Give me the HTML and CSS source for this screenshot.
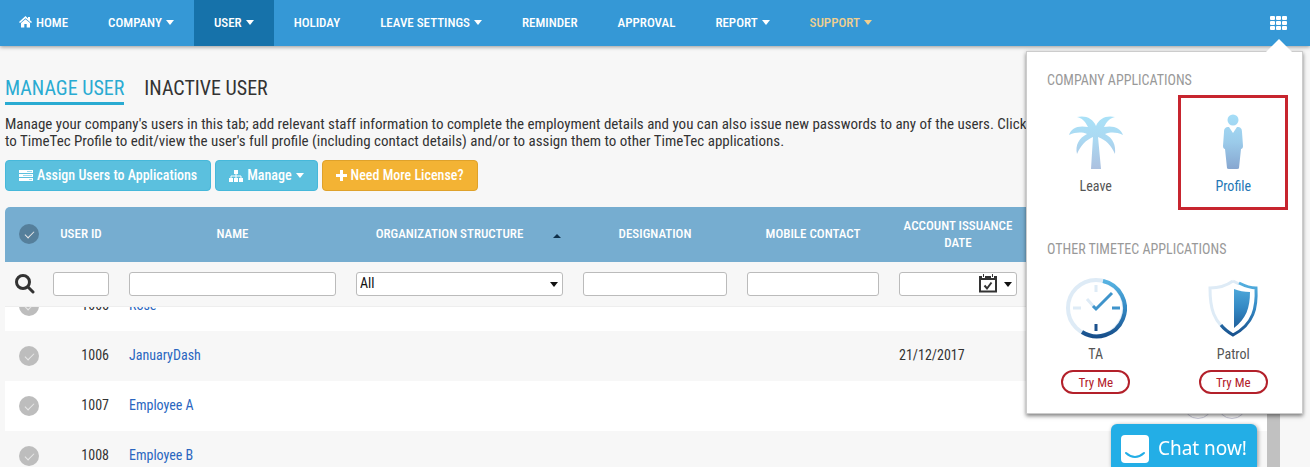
FILE: index.html
```
<!DOCTYPE html>
<html lang="en">
<head>
    <meta charset="UTF-8">
    <meta name="viewport" content="width=device-width, initial-scale=1.0">
    <title>Manage User</title>
    <link rel="stylesheet" href="styles.css">
</head>
<body>

    <!-- Top menu -->
    <header class="topbar">
        <nav class="menu">
            <a href="#">
                <svg class="home-icon" viewBox="0 0 13 12" aria-hidden="true"><path d="M6.500 0L0 6l1 1 5.500-4.700L12 7l1-1-2-1.800V1H9v1.500zM6.500 3.200L2 7v4.500h3.300V8h2.400v3.500H11V7z" fill="currentColor"/></svg>
                HOME
            </a>
            <a href="#">COMPANY <span class="caret"></span></a>
            <a href="#" class="active">USER <span class="caret"></span></a>
            <a href="#">HOLIDAY</a>
            <a href="#">LEAVE SETTINGS <span class="caret"></span></a>
            <a href="#">REMINDER</a>
            <a href="#">APPROVAL</a>
            <a href="#">REPORT <span class="caret"></span></a>
            <a href="#" class="support">SUPPORT <span class="caret"></span></a>
        </nav>
        <div class="apps">
            <button type="button" class="apps-button" aria-label="Applications">
                <svg width="18" height="15" viewBox="0 0 18 15"><g fill="#fff"><rect width="5" height="4" rx="1"/><rect x="6" width="5" height="4" rx="1"/><rect x="12" width="5" height="4" rx="1"/><rect y="5" width="5" height="4" rx="1"/><rect x="6" y="5" width="5" height="4" rx="1"/><rect x="12" y="5" width="5" height="4" rx="1"/><rect y="10" width="5" height="4" rx="1"/><rect x="6" y="10" width="5" height="4" rx="1"/><rect x="12" y="10" width="5" height="4" rx="1"/></g></svg>
            </button>

            <!-- Applications popup -->
            <div class="apps-popup">
                <h3>COMPANY APPLICATIONS</h3>
                <div class="app-grid">
                    <a href="#" class="app">
                        <svg width="56" height="56" viewBox="0 0 56 56" aria-hidden="true">
                            <defs><linearGradient id="sky" x1="0" y1="0" x2="0" y2="56" gradientUnits="userSpaceOnUse"><stop offset="0" stop-color="#a9e2f8"/><stop offset=".45" stop-color="#abd9f2"/><stop offset="1" stop-color="#acc0df"/></linearGradient></defs>
                            <path fill="url(#sky)" d="M28 12C25 4 17 1 9 3c5 1 8 4 11 10C10 11 3 14 1 21c7-3 13-3 18-1C11 24 7 31 9 40c4-9 9-14 16-17l-2 32h10l-3-32c8 3 13 8 17 17 1-9-2-16-10-20 6-2 11-2 18 1C53 14 45 11 36 13c3-6 6-9 11-10C39 1 31 4 28 12z"/>
                        </svg>
                        Leave
                    </a>
                    <a href="#" class="app selected">
                        <svg width="56" height="56" viewBox="0 0 56 56" aria-hidden="true">
                            <defs><linearGradient id="suit" x1="0" y1="0" x2="0" y2="56" gradientUnits="userSpaceOnUse"><stop offset="0" stop-color="#a5def8"/><stop offset=".5" stop-color="#9bcbea"/><stop offset="1" stop-color="#86a5cf"/></linearGradient></defs>
                            <g fill="url(#suit)"><circle cx="28" cy="6" r="5.500"/><path d="M24 13l4 6 4-6c4 0 5 2 5 5l1 14c0 2-1 3-2 3l-2 19q0 1-2 1h-8q-2 0-2-1l-2-19c-1 0-2-1-2-3l1-14c0-3 1-5 5-5z"/></g>
                        </svg>
                        Profile
                    </a>
                </div>
                <h3>OTHER TIMETEC APPLICATIONS</h3>
                <div class="app-grid">
                    <div class="app trial">
                        <svg width="62" height="62" viewBox="0 0 62 62" fill="none" aria-hidden="true">
                            <defs><linearGradient id="deep" x1="0" y1="0" x2="0" y2="62" gradientUnits="userSpaceOnUse"><stop offset="0" stop-color="#5cb9e6"/><stop offset=".5" stop-color="#3489c4"/><stop offset="1" stop-color="#154a86"/></linearGradient></defs>
                            <circle cx="31" cy="31" r="28" stroke="#deebf6" stroke-width="4"/>
                            <path d="M38 4A28 28 0 1 1 17 55" stroke="url(#deep)" stroke-width="4"/>
                            <path d="M31 8v7M8 31h8M22 22l8 9" stroke="#deebf6" stroke-width="3"/>
                            <path d="M28 29l3 3 16-16M47 31h8" stroke="#3f94cb" stroke-width="3"/>
                            <path d="M31 47v7" stroke="#1c518d" stroke-width="3"/>
                        </svg>
                        <a href="#">TA</a>
                        <button type="button" class="try">Try Me</button>
                    </div>
                    <div class="app trial">
                        <svg width="62" height="62" viewBox="0 0 62 62" fill="none" aria-hidden="true">
                            <path d="M31 4c-7 5-15 7-23 7 0 18 2 35 23 47" stroke="#deebf6" stroke-width="3"/>
                            <path d="M31 4l6 3" stroke="#deebf6" stroke-width="3"/>
                            <path d="M37 6c6 3 11 5 17 5 1 19-2 36-23 47-5-3-9-6-12-10" stroke="url(#deep)" stroke-width="3"/>
                            <path d="M32 12c5 2 10 3 16 3 0 16-4 27-16 36z" fill="url(#deep)"/>
                        </svg>
                        <a href="#">Patrol</a>
                        <button type="button" class="try">Try Me</button>
                    </div>
                </div>
            </div>
        </div>
    </header>

    <!-- Main content -->
    <main class="content">
        <div class="tabs">
            <a href="#" class="active">MANAGE USER</a>
            <a href="#">INACTIVE USER</a>
        </div>

        <p class="intro">
            Manage your company's users in this tab; add relevant staff information to complete the employment details and you can also issue new passwords to any of the users. Click Edit<br>
            to TimeTec Profile to edit/view the user's full profile (including contact details) and/or to assign them to other TimeTec applications.
        </p>

        <div class="actions">
            <button type="button" class="btn">
                <svg width="14" height="12" viewBox="0 0 14 12"><path d="M0 0h14v3H0zM0 4h14v3H0zM0 8h14v3H0z" fill="#fff"/><path d="M8 1.500h5M4 5.500h9M10 9.500h3" stroke="#5bc0de" opacity=".6"/></svg>
                Assign Users to Applications
            </button>
            <button type="button" class="btn">
                <svg width="14" height="12" viewBox="0 0 14 12"><path d="M5 0h4v4H5zM0 8h4v4H0zM5 8h4v4H5zM10 8h4v4h-4z" fill="#fff"/><path d="M7 3v6M2 9V6h10v3" stroke="#fff" fill="none"/></svg>
                Manage <span class="caret"></span>
            </button>
            <button type="button" class="btn btn-warning">
                <svg width="11" height="11" viewBox="0 0 11 11"><path d="M4 0h3v4h4v3H7v4H4V7H0V4h4z" fill="#fff"/></svg>
                Need More License?
            </button>
        </div>

        <!-- User list -->
        <table class="user-table user-head">
            <colgroup><col class="c-check"><col class="c-id"><col class="c-name"><col class="c-org"><col class="c-desig"><col class="c-mobile"><col class="c-date"><col></colgroup>
            <thead>
                <tr>
                    <th><input type="checkbox" class="check" aria-label="Select all"></th>
                    <th>USER ID</th>
                    <th>NAME</th>
                    <th class="sorted">ORGANIZATION STRUCTURE</th>
                    <th>DESIGNATION</th>
                    <th>MOBILE CONTACT</th>
                    <th>ACCOUNT ISSUANCE DATE</th>
                    <th></th>
                </tr>
                <tr class="filters">
                    <td><svg class="search-icon" width="20" height="20" viewBox="0 0 20 20"><circle cx="8" cy="8" r="6.500" fill="none" stroke="#333" stroke-width="3"/><path d="M13 13l5 5" stroke="#333" stroke-width="3" stroke-linecap="round"/></svg></td>
                    <td><input type="text" aria-label="User ID"></td>
                    <td><input type="text" aria-label="Name"></td>
                    <td><div class="select"><select aria-label="Organization structure"><option>All</option></select></div></td>
                    <td><input type="text" aria-label="Designation"></td>
                    <td><input type="text" aria-label="Mobile contact"></td>
                    <td>
                        <div class="date">
                            <input type="text" aria-label="Account issuance date">
                            <svg width="18" height="19" viewBox="0 0 18 19"><path d="M1 3h16v14.500H1z" fill="#fff" stroke="#333" stroke-width="2"/><path d="M0 2h18v4H0z" fill="#333"/><path d="M4.500 0v4M13.500 0v4" stroke="#fff" stroke-width="3"/><path d="M4.500 0v3M13.500 0v3" stroke="#333"/><path d="M5.500 11.500l2.500 3 4.500-6" fill="none" stroke="#333" stroke-width="2"/></svg>
                        </div>
                    </td>
                    <td></td>
                </tr>
            </thead>
        </table>
        <div class="rows">
            <table class="user-table user-body">
                <colgroup><col class="c-check"><col class="c-id"><col class="c-name"><col class="c-org"><col class="c-desig"><col class="c-mobile"><col class="c-date"><col></colgroup>
                <tbody>
                    <tr>
                        <td><input type="checkbox" class="check" aria-label="Select 1005"></td>
                        <td>1005</td>
                        <td><a href="#">Rose</a></td>
                        <td></td><td></td><td></td><td></td><td></td>
                    </tr>
                    <tr>
                        <td><input type="checkbox" class="check" aria-label="Select 1006"></td>
                        <td>1006</td>
                        <td><a href="#">JanuaryDash</a></td>
                        <td></td><td></td><td></td>
                        <td>21/12/2017</td>
                        <td></td>
                    </tr>
                    <tr>
                        <td><input type="checkbox" class="check" aria-label="Select 1007"></td>
                        <td>1007</td>
                        <td><a href="#">Employee A</a></td>
                        <td></td><td></td><td></td><td></td>
                        <td class="row-tools"><button type="button" aria-label="Edit"></button><button type="button" aria-label="Delete"></button></td>
                    </tr>
                    <tr>
                        <td><input type="checkbox" class="check" aria-label="Select 1008"></td>
                        <td>1008</td>
                        <td><a href="#">Employee B</a></td>
                        <td></td><td></td><td></td><td></td><td></td>
                    </tr>
                </tbody>
            </table>
            <div class="scroll-thumb"></div>
        </div>
    </main>

    <!-- Chat -->
    <button type="button" class="chat">
        <svg width="28" height="28" viewBox="0 0 28 28"><rect width="28" height="28" rx="4" fill="#fff"/><path d="M5 18q9 8 18 0" fill="none" stroke="#23aee6" stroke-width="2" stroke-linecap="round"/></svg>
        Chat now!
    </button>

</body>
</html>
```
FILE: styles.css
```
* {
    margin: 0;
    padding: 0;
    box-sizing: border-box;
}

/* General layout */
body {
    font-family: "Roboto Condensed", Roboto, sans-serif;
    font-size: 14px;
    line-height: 17px;
    color: #333;
    display: flex;
    flex-direction: column;
    height: 100vh;
    overflow: hidden;
    background-color: #f7f7f7;
}

a {
    color: inherit;
    text-decoration: none;
}

button,
input,
select {
    font: inherit;
    color: inherit;
}

button {
    border: none;
    background: none;
    cursor: pointer;
}

/* Top menu */
.topbar {
    display: flex;
    justify-content: space-between;
    flex-shrink: 0;
    height: 46px;
    background-color: #3598d6;
    box-shadow: 0 1px 4px rgba(0, 0, 0, 0.4);
    position: relative;
    z-index: 2;
}

.menu {
    display: flex;
}

.menu a {
    display: flex;
    align-items: center;
    gap: 4px;
    padding: 0 20px 2px;
    color: white;
    font-size: 13px;
    font-weight: 500;
    white-space: nowrap;
}

.menu a:first-child {
    padding-left: 19px;
}

.menu .active {
    background-color: #1672aa;
}

.menu .support {
    color: #f0cf8f;
}

.home-icon {
    width: 13px;
    height: 12px;
}

.caret {
    display: inline-block;
    border: 4px solid transparent;
    border-top: 5px solid;
    border-bottom: none;
}

/* Applications popup */
.apps {
    display: flex;
    position: relative;
    padding-right: 22px;
}

.apps-button svg {
    display: block;
}

.apps-popup {
    position: absolute;
    top: 51px;
    right: 7px;
    width: 277px;
    padding: 20px 0 16px;
    background-color: white;
    border: 1px solid #ccc;
    box-shadow: 0 2px 4px rgba(0, 0, 0, 0.5);
}

.apps-popup::before {
    content: "";
    position: absolute;
    top: -13px;
    right: 10px;
    border: 13px solid transparent;
    border-top: none;
    border-bottom-color: white;
}

.apps-popup h3 {
    padding-left: 20px;
    font-size: 14px;
    font-weight: normal;
    color: #999;
}

.app-grid + h3 {
    margin-top: 31px;
}

.app-grid {
    display: grid;
    grid-template-columns: 1fr 1fr;
    justify-items: center;
    padding-top: 6px;
}

.app {
    display: flex;
    flex-direction: column;
    align-items: center;
    gap: 8px;
    width: 110px;
    min-height: 115px;
    padding-top: 16px;
    border: 3px solid transparent;
    color: #555;
}

.app.selected {
    color: #2377b5;
    border-color: #c7252f;
}

.app.trial {
    gap: 7px;
    padding-top: 10px;
}

.try {
    width: 69px;
    height: 24px;
    border: 2px solid #b3202a;
    border-radius: 12px;
    color: #b3202a;
    font-size: 13px;
}

/* Main content */
.content {
    display: flex;
    flex-direction: column;
    flex: 1;
    min-height: 0;
    padding: 30px 30px 0 5px;
}

.tabs {
    display: flex;
    gap: 20px;
    font-size: 20px;
    line-height: 25px;
}

.tabs a {
    padding-bottom: 1px;
    border-bottom: 3px solid transparent;
}

.tabs .active {
    color: #2aabd2;
    border-color: #2aabd2;
}

.intro {
    padding: 11px 0 10px;
    font-size: 15px;
    white-space: nowrap;
}

.actions {
    display: flex;
    gap: 4px;
    margin-bottom: 16px;
}

.btn {
    display: flex;
    align-items: center;
    gap: 4px;
    height: 31px;
    padding: 0 13px;
    background-color: #5bc0de;
    border: 1px solid #46b8da;
    border-radius: 4px;
    color: white;
    font-weight: 500;
}

.btn-warning {
    background-color: #f3b334;
    border-color: #dfa22b;
}

/* User list */
.user-table {
    width: 100%;
    table-layout: fixed;
    border-collapse: collapse;
}

.c-check { width: 38px; }
.c-id { width: 76px; }
.c-name,
.c-org { width: 227px; }
.c-desig { width: 164px; }
.c-mobile { width: 152px; }
.c-date { width: 138px; }

.user-head th {
    height: 55px;
    padding: 0 10px 2px;
    background-color: #76add0;
    color: white;
    font-size: 13px;
    font-weight: 500;
}

.user-head th:first-child {
    border-top-left-radius: 5px;
}

.user-head .sorted {
    position: relative;
    padding-right: 30px;
}

.sorted::after {
    content: "";
    position: absolute;
    right: 12px;
    top: 27px;
    border: 4px solid transparent;
    border-top: none;
    border-bottom-color: #10304a;
}

.filters td {
    height: 44px;
    padding: 0 10px;
    border-bottom: 1px solid #eee;
}

.filters input,
.filters select {
    display: block;
    width: 100%;
    height: 24px;
    background-color: white;
    border: 1px solid #bbb;
    border-radius: 3px;
}

.filters select {
    appearance: none;
    padding-left: 3px;
    color: #111;
}

.select,
.date {
    position: relative;
}

.select::after,
.date::after {
    content: "";
    position: absolute;
    right: 5px;
    top: 10px;
    border: 4px solid transparent;
    border-top: 5px solid #111;
    border-bottom: none;
}

.date svg {
    position: absolute;
    right: 20px;
    top: 2px;
}

.search-icon {
    display: block;
}

/* Round tick boxes */
.check {
    appearance: none;
    display: block;
    position: relative;
    width: 20px;
    height: 20px;
    margin-left: 4px;
    border-radius: 50%;
    background-color: #bdbdbd;
}

.check::after {
    content: "";
    position: absolute;
    left: 8px;
    top: 5px;
    width: 4px;
    height: 8px;
    border: solid #e8e8e8;
    border-width: 0 1px 1px 0;
    transform: rotate(45deg);
}

th .check {
    background-color: #557f9b;
}

.rows {
    display: flex;
    flex: 1;
    min-height: 0;
    overflow: hidden;
}

.user-body {
    flex: 1;
    align-self: flex-start;
    margin-top: -26px;
}

.user-body td {
    height: 50px;
    padding: 0 10px;
}

.user-body td:nth-child(2) {
    text-align: right;
}

.user-body tr:nth-child(odd) {
    background-color: white;
}

.user-body a {
    color: #2a66c0;
}

.user-body .row-tools {
    padding-left: 156px;
    white-space: nowrap;
}

.row-tools button {
    width: 30px;
    height: 30px;
    margin-right: 4px;
    border: 1px solid #ccccdc;
    border-radius: 50%;
}

.scroll-thumb {
    width: 13px;
    background-color: #c1c1c1;
}

/* Chat */
.chat {
    position: fixed;
    z-index: 3;
    right: 53px;
    bottom: 0;
    display: flex;
    align-items: center;
    gap: 9px;
    height: 43px;
    padding: 6px 10px 0;
    background-color: #23aee6;
    border-radius: 6px 6px 0 0;
    box-shadow: 1px 1px 4px rgba(0, 0, 0, 0.4);
    color: white;
    font-family: "Noto Sans", sans-serif;
    font-size: 19px;
}
```
